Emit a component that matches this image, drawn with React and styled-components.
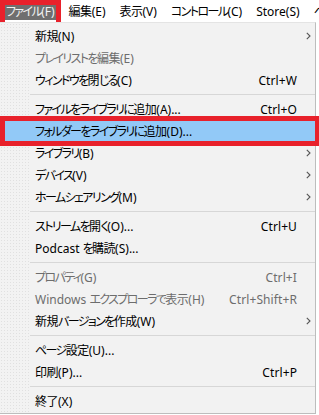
import React from "react";
import styled, { createGlobalStyle } from "styled-components";

const GlobalStyle = createGlobalStyle`
  body {
    margin: 0;
    background: #ffffff;
    font-family: "Noto Sans", "Noto Sans CJK JP", sans-serif;
    font-size: 12px;
    color: #000;
  }
`;

const topItems = [
  { label: "ファイル(F)", active: true },
  { label: "編集(E)" },
  { label: "表示(V)" },
  { label: "コントロール(C)" },
  { label: "Store(S)" },
  { label: "ヘルプ(H)" },
];

const groups = [
  [
    { label: "新規(N)", sub: true },
    { label: "プレイリストを編集(E)", disabled: true },
    { label: "ウィンドウを閉じる(C)", key: "Ctrl+W" },
  ],
  [
    { label: "ファイルをライブラリに追加(A)...", key: "Ctrl+O" },
    { label: "フォルダーをライブラリに追加(D)...", selected: true },
    { label: "ライブラリ(B)", sub: true },
    { label: "デバイス(V)", sub: true },
    { label: "ホームシェアリング(M)", sub: true },
  ],
  [
    { label: "ストリームを開く(O)...", key: "Ctrl+U" },
    { label: "Podcast を購読(S)..." },
  ],
  [
    { label: "プロパティ(G)", key: "Ctrl+I", disabled: true },
    { label: "Windows エクスプローラで表示(H)", key: "Ctrl+Shift+R", disabled: true },
    { label: "新規バージョンを作成(W)", sub: true },
  ],
  [
    { label: "ページ設定(U)..." },
    { label: "印刷(P)...", key: "Ctrl+P" },
  ],
  [{ label: "終了(X)" }],
];

// kana in the UI font are much narrower than Noto's, so tighten CJK runs
const Kana = styled.span`
  letter-spacing: -1.6px;
`;

const Kanji = styled.span`
  letter-spacing: -0.5px;
`;

function Label({ text }) {
  const parts = text.match(/[\u3040-\u30ff]+|[\u4e00-\u9fff]+|[^\u3040-\u30ff\u4e00-\u9fff]+/g) || [];
  return parts.map((p, i) => {
    if (/^[\u3040-\u30ff]/.test(p)) return <Kana key={i}>{p}</Kana>;
    if (/^[\u4e00-\u9fff]/.test(p)) return <Kanji key={i}>{p}</Kanji>;
    return <span key={i}>{p}</span>;
  });
}

const Page = styled.div`
  width: 319px;
  height: 415px;
  overflow: hidden;
  position: relative;
`;

const MenuBar = styled.div`
  display: flex;
  align-items: center;
  height: 22px;
  padding-left: 5px;
  background: #ffffff;
  white-space: nowrap;
  font-feature-settings: "palt";
`;

const TopItem = styled.div`
  position: relative;
  height: 17px;
  line-height: 17px;
  padding: 0 1px;
  margin-right: 12px;
  background: ${(p) => (p.$active ? "#6f6f6f" : "transparent")};
  color: ${(p) => (p.$active ? "#f2f2f2" : "#000")};

  &::after {
    content: "";
    display: ${(p) => (p.$active ? "block" : "none")};
    position: absolute;
    left: -5px;
    right: -5px;
    top: -3px;
    bottom: -7px;
    border: 5px solid #e8212b;
    pointer-events: none;
  }
`;

const Dropdown = styled.div`
  width: 315px;
  padding: 2px 0 1px;
  background-color: #f2f2f2;
  background-image: radial-gradient(circle, #e0e0e0 0.6px, transparent 0.9px);
  background-size: 3px 3px;
  border-right: 1px solid #bdbdbd;
  border-bottom: 1px solid #bdbdbd;
  border-top: 1px solid #e4e4e4;
  position: relative;
  font-feature-settings: "palt";

  &::before {
    content: "";
    position: absolute;
    left: 30px;
    top: 0;
    right: 0;
    bottom: 0;
    background: #f2f2f2;
  }
`;

const Row = styled.div`
  position: relative;
  z-index: 1;
  display: grid;
  grid-template-columns: 1fr auto 18px;
  align-items: center;
  height: 22px;
  padding-left: 35px;
  background: ${(p) => (p.$selected ? "#92c9f7" : "transparent")};
  color: ${(p) => (p.$disabled ? "#6d6d6d" : "#000")};
  white-space: nowrap;

  &::after {
    content: "";
    display: ${(p) => (p.$selected ? "block" : "none")};
    position: absolute;
    left: 0;
    right: -5px;
    top: -4px;
    bottom: -4px;
    border: 5px solid #e8212b;
    pointer-events: none;
  }
`;

const Shortcut = styled.span`
  letter-spacing: 0.1px;
`;

const Arrow = styled.svg`
  justify-self: center;
  margin-left: 4px;
`;

const Separator = styled.div`
  position: relative;
  z-index: 1;
  height: 1px;
  margin: 3px 0 3px 30px;
  background: #d7d7d7;
`;

const MenuItem = ({ item }) => (
  <Row $selected={item.selected} $disabled={item.disabled}>
    <span>
      <Label text={item.label} />
    </span>
    <Shortcut>{item.key || ""}</Shortcut>
    {item.sub ? (
      <Arrow width="5" height="8" viewBox="0 0 5 8">
        <path d="M0.8 0.8 L4 4 L0.8 7.2" fill="none" stroke="#555" strokeWidth="1.1" />
      </Arrow>
    ) : (
      <span />
    )}
  </Row>
);

const App = () => (
  <Page>
    <GlobalStyle />
    <MenuBar>
      {topItems.map((t) => (
        <TopItem key={t.label} $active={t.active}>
          <Label text={t.label} />
        </TopItem>
      ))}
    </MenuBar>
    <Dropdown>
      {groups.map((g, gi) => (
        <React.Fragment key={gi}>
          {gi > 0 && <Separator />}
          {g.map((item) => (
            <MenuItem key={item.label} item={item} />
          ))}
        </React.Fragment>
      ))}
    </Dropdown>
  </Page>
);

export default App;
